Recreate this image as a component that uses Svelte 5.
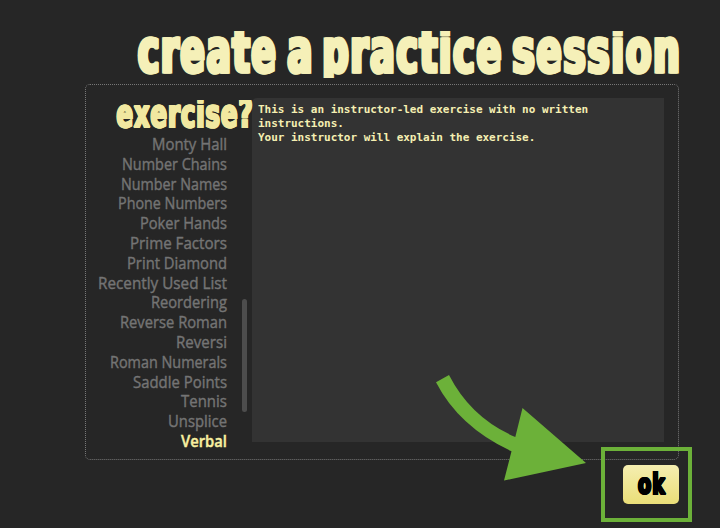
<script>
  const titleWords = [
    { text: 'create', x: 138, width: 139.5 },
    { text: 'a', x: 287.5, width: 26.5 },
    { text: 'practice', x: 322.5, width: 180.5 },
    { text: 'session', x: 512.5, width: 169 }
  ];
  const exercises = [
    ['Monty Hall', 75], ['Number Chains', 105], ['Number Names', 106],
    ['Phone Numbers', 109], ['Poker Hands', 87], ['Prime Factors', 97],
    ['Print Diamond', 100], ['Recently Used List', 129], ['Reordering', 76],
    ['Reverse Roman', 107], ['Reversi', 51], ['Roman Numerals', 117],
    ['Saddle Points', 94], ['Tennis', 46], ['Unsplice', 59], ['Verbal', 46]
  ];
  let selected = $state('Verbal');
</script>

<main>
  <h1>
    <svg width="720" height="84">
      {#each titleWords as word}
        <text x={word.x} y="71.6" textLength={word.width} lengthAdjust="spacingAndGlyphs">{word.text}</text>
      {/each}
    </svg>
  </h1>
  <section class="panel">
    <div class="chooser">
      <h2>
        <svg width="140" height="36">
          <text x="1.5" y="28.5" textLength="137" lengthAdjust="spacingAndGlyphs">exercise?</text>
        </svg>
      </h2>
      <ul>
        {#each exercises as [name, width]}
          <li>
            <button class="item" class:selected={selected === name} onclick={() => (selected = name)} aria-label={name}>
              <svg {width} height="20"><text x="0" y="15" textLength={width} lengthAdjust="spacingAndGlyphs">{name}</text></svg>
            </button>
          </li>
        {/each}
      </ul>
      <span class="thumb"></span>
    </div>
    <div class="instructions">This is an instructor-led exercise with no written
instructions.
Your instructor will explain the exercise.</div>
  </section>
  <button class="ok" aria-label="ok">
    <svg width="56" height="39"><text x="15" y="29.3" textLength="28" lengthAdjust="spacingAndGlyphs">ok</text></svg>
  </button>
  <div class="highlight"></div>
  <svg class="arrow" width="720" height="528">
    <path d="M436 382.3L449 375Q471 418 515.3 437L522.5 408L586 463L504 480.5L511.5 451.3Q459 427 436 382.3Z" />
  </svg>
</main>

<style>
  :global(body) { margin: 0; background: #262626; }
  main {
    position: relative;
    width: 720px;
    height: 528px;
    overflow: hidden;
    background: #262626;
    display: flex;
    flex-direction: column;
  }
  svg { display: block; overflow: visible; }
  h1, h2, ul { margin: 0; padding: 0; }
  h1 text, h2 text, .ok text {
    font-family: Impact, "DejaVu Sans", sans-serif;
    font-weight: 700;
    stroke-linejoin: miter;
    stroke-miterlimit: 2;
  }
  h1 { height: 84px; clip-path: inset(31px 0 6px 0); }
  h1 text { font-size: 60px; letter-spacing: 3px; fill: #f5f0b8; stroke: #f5f0b8; stroke-width: 3.2px; text-shadow: 1.5px 0 #f5f0b8, -1.5px 0 #f5f0b8; }
  .panel {
    box-sizing: border-box;
    width: 594px;
    height: 376px;
    margin-left: 85px;
    padding: 13px 14px 17px 0;
    display: flex;
    border: 1px dotted #777;
    border-radius: 5px;
  }
  .chooser { position: relative; width: 166px; flex: none; }
  h2 { height: 37px; margin-left: 29px; clip-path: inset(2px -2px 0 -2px); }
  h2 text { font-size: 39px; letter-spacing: 1.6px; fill: #f1e8a0; stroke: #f1e8a0; stroke-width: 2px; text-shadow: 0.8px 0 #f1e8a0, -0.8px 0 #f1e8a0; }
  ul { list-style: none; width: 141px; }
  li { height: 19.8px; display: flex; justify-content: flex-end; }
  button { border: 0; padding: 0; margin: 0; cursor: pointer; }
  .item { background: none; height: 20px; }
  .item text { font: 15.5px "Trebuchet MS", "Open Sans", sans-serif; fill: #747474; stroke: #747474; stroke-width: 0.4px; }
  .item.selected text { fill: #f8f0a0; stroke: #f8f0a0; font-weight: 600; }
  .thumb {
    position: absolute;
    right: 5px;
    top: 201px;
    width: 5px;
    height: 113px;
    border-radius: 3px;
    background: #4d4d4d;
  }
  .instructions {
    box-sizing: border-box;
    width: 412px;
    height: 344px;
    padding: 5px 6px;
    border-radius: 5px 0 0 0;
    background: #333;
    color: #f5efb2;
    font: bold 11px/14px "DejaVu Sans Mono", monospace;
    letter-spacing: -0.02px;
    white-space: pre;
  }
  .ok {
    width: 56px;
    height: 39px;
    margin: 5px 0 0 622.5px;
    border-radius: 5px;
    background: linear-gradient(#f5eeb0, #eade78);
  }
  .ok text { font-size: 28px; letter-spacing: 1.5px; fill: #000; stroke: #000; stroke-width: 1.8px; text-shadow: 0.6px 0 #000, -0.6px 0 #000; }
  .highlight {
    position: absolute;
    box-sizing: border-box;
    left: 601px;
    top: 447px;
    width: 91px;
    height: 75px;
    border: 4px solid #6cb139;
    pointer-events: none;
  }
  .arrow { position: absolute; inset: 0; fill: #6cb139; pointer-events: none; }
</style>
